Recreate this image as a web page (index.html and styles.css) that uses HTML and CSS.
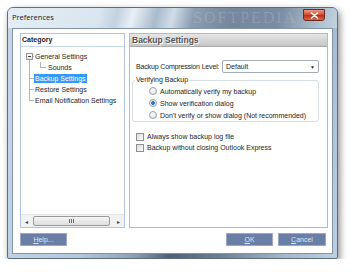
FILE: index.html
```html
<!DOCTYPE html>
<html lang="en">
<head>
    <meta charset="UTF-8">
    <title>Preferences</title>
    <link rel="stylesheet" href="styles.css">
</head>
<body>

<div class="window">
    <div class="titlebar">
        <span class="title">Preferences</span>
        <span class="watermark">SOFTPEDIA</span>
        <button class="close">
            <svg width="9" height="7" viewBox="0 0 9 7"><path d="M1.5 1 L7.5 6 M7.5 1 L1.5 6" stroke="#fff" stroke-width="1.6" stroke-linecap="round"/></svg>
        </button>
    </div>

    <div class="client">
        <div class="panes">
            <div class="cat-pane">
                <div class="cat-head">Category</div>
                <ul class="tree">
                    <li class="first"><span class="exp"></span>General Settings</li>
                    <li class="child"><span class="elbow"></span>Sounds</li>
                    <li><span class="sel">Backup Settings</span></li>
                    <li>Restore Settings</li>
                    <li class="last">Email Notification Settings</li>
                </ul>
                <div class="hscroll">
                    <span class="sb-btn">&#9666;</span>
                    <span class="thumb"><i></i><i></i><i></i></span>
                    <span class="sb-btn right">&#9656;</span>
                </div>
            </div>

            <div class="set-pane">
                <div class="set-head">Backup Settings</div>
                <div class="set-body">
                    <div class="field">
                        <label>Backup Compression Level:</label>
                        <div class="select">Default<span class="drop">&#9660;</span></div>
                    </div>
                    <fieldset class="group">
                        <legend>Verifying Backup</legend>
                        <div class="opt"><span class="radio"></span>Automatically verify my backup</div>
                        <div class="opt"><span class="radio on"></span>Show verification dialog</div>
                        <div class="opt"><span class="radio"></span>Don't verify or show dialog (Not recommended)</div>
                    </fieldset>
                    <div class="checks">
                        <div class="opt"><span class="box"></span>Always show backup log file</div>
                        <div class="opt"><span class="box"></span>Backup without closing Outlook Express</div>
                    </div>
                </div>
            </div>
        </div>

        <div class="buttons">
            <button class="btn"><u>H</u>elp...</button>
            <button class="btn push"><u>O</u>K</button>
            <button class="btn wide"><u>C</u>ancel</button>
        </div>
    </div>
</div>

</body>
</html>
```

FILE: styles.css
```css
body {
    margin: 0;
    background: #fff;
    font-family: 'Liberation Sans', Arial, sans-serif;
    font-size: 7px;
    color: #1e1e1e;
}
.window {
    margin: 7px 0 0 7px;
    width: 331px;
    height: 252px;
    box-sizing: border-box;
    padding: 0 4px 4px;
    border: 1px solid #5d6d7e;
    border-radius: 6px 6px 2px 2px;
    background: linear-gradient(100deg, #c6d8e8 0%, #b4c9dc 30%, #8fa3b7 45%, #4f6277 55%, #6a7d91 68%, #a2b6c8 85%, #bed0df 100%);
    box-shadow: 2px 3px 7px rgba(0, 0, 0, 0.45);
    display: flex;
    flex-direction: column;
}
.titlebar {
    height: 20px;
    display: flex;
    align-items: flex-start;
    position: relative;
    margin: 0 -4px;
    padding: 0 4px;
    border-radius: 5px 5px 0 0;
    background: linear-gradient(105deg, #e4edf5 0%, #d9e5ef 28%, #c2d2e0 33%, #e8eff6 38%, #a9bbcc 45%, #d0dde8 50%, #8c9eb1 56%, #74879b 68%, #7b8da1 82%, #a6b8c8 92%, #c4d3e0 100%);
}
.title {
    margin-top: 3px;
    line-height: 12px;
    font-family: 'Open Sans', 'Liberation Sans', sans-serif;
    font-size: 7.5px;
    color: #1a1a1a;
}
.watermark {
    position: absolute;
    left: 185px;
    top: 1px;
    font-family: 'Liberation Serif', serif;
    font-size: 16px;
    letter-spacing: 2px;
    color: rgba(210, 220, 230, 0.22);
}
.close {
    margin: 1px 8px 0 auto;
    width: 22px;
    height: 12px;
    padding: 0;
    border: 1px solid #6b2a20;
    border-radius: 0 0 3px 3px;
    background: linear-gradient(#e99a86, #d5523a 45%, #bf2f16 55%, #d86a4e);
    display: flex;
    align-items: center;
    justify-content: center;
}
.client {
    flex: 1;
    box-sizing: border-box;
    background: #fff;
    border: 1px solid #8193a6;
    padding: 4px 4px 0 7px;
    display: flex;
    flex-direction: column;
}
.panes {
    display: flex;
    gap: 4px;
    height: 195px;
}
.cat-pane {
    width: 105px;
    box-sizing: border-box;
    border: 1px solid #aec4e0;
    display: flex;
    flex-direction: column;
    overflow: hidden;
}
.cat-head {
    height: 12px;
    line-height: 12px;
    padding-left: 1px;
    font-weight: bold;
    border-bottom: 1px solid #c5d6ec;
}
.tree {
    list-style: none;
    margin: 0;
    padding: 4px 0 0;
}
.tree li {
    position: relative;
    height: 11px;
    line-height: 11px;
    padding-left: 14px;
    white-space: nowrap;
}
.tree li::before {
    content: "";
    position: absolute;
    left: 8px;
    top: 0;
    bottom: 0;
    border-left: 1px solid #b4b4b4;
}
.tree li::after {
    content: "";
    position: absolute;
    left: 9px;
    top: 5px;
    width: 4px;
    border-top: 1px solid #b4b4b4;
}
.tree li.first::before {
    top: 6px;
}
.tree li.last::before {
    bottom: 5px;
}
.tree li.child {
    padding-left: 27px;
}
.tree li.child::after {
    display: none;
}
.elbow {
    position: absolute;
    left: 19px;
    top: 0;
    width: 5px;
    height: 5px;
    border-left: 1px solid #b4b4b4;
    border-bottom: 1px solid #b4b4b4;
}
.exp {
    position: absolute;
    left: 5px;
    top: 2px;
    width: 7px;
    height: 7px;
    box-sizing: border-box;
    border: 1px solid #959595;
    background: linear-gradient(#fff, #e4e4e4);
    z-index: 1;
}
.exp::after {
    content: "";
    position: absolute;
    left: 1px;
    top: 2px;
    width: 3px;
    border-top: 1px solid #3b3b3b;
}
.sel {
    background: #3399ff;
    color: #fff;
    padding: 1px 1px;
    margin-left: -1px;
}
.hscroll {
    margin-top: auto;
    height: 12px;
    display: flex;
    align-items: center;
    background: #f2f2f2;
    border-top: 1px solid #e6e6e6;
}
.sb-btn {
    width: 10px;
    text-align: center;
    font-size: 6px;
    color: #444;
}
.sb-btn.right {
    margin-left: auto;
    width: 11px;
}
.thumb {
    margin-left: 2px;
    width: 77px;
    height: 10px;
    box-sizing: border-box;
    border: 1px solid #9b9b9b;
    border-radius: 2px;
    background: linear-gradient(#f6f6f6, #dcdcdc);
    display: flex;
    justify-content: center;
    align-items: center;
    gap: 1px;
}
.thumb i {
    width: 1px;
    height: 4px;
    background: #6a6a6a;
}
.set-pane {
    flex: 1;
    border: 1px solid #b9b9b9;
    background: #fff;
}
.set-head {
    height: 12px;
    line-height: 12px;
    padding-left: 2px;
    font-weight: bold;
    font-size: 8.5px;
    color: #575757;
    text-shadow: 1px 1px 0 #fff;
    background: linear-gradient(#e6e6e6, #c6c6c6);
    border-bottom: 1px solid #a9a9a9;
}
.set-body {
    padding: 13px 0 0 6px;
}
.field {
    display: flex;
    align-items: center;
    height: 13px;
}
.field label {
    width: 86px;
    white-space: nowrap;
    letter-spacing: -0.15px;
}
.select {
    width: 97px;
    height: 13px;
    box-sizing: border-box;
    border: 1px solid #a4abb4;
    border-radius: 2px;
    padding: 0 3px;
    display: flex;
    align-items: center;
    justify-content: space-between;
}
.drop {
    font-size: 5px;
    color: #333;
}
.group {
    margin: 2px 0 0 -4px;
    width: 187px;
    box-sizing: border-box;
    padding: 0 0 0 16px;
    border: 1px solid #d6dee4;
    border-radius: 3px;
}
.group legend {
    padding: 0 1px;
    margin-left: -14px;
    line-height: 10px;
}
.opt {
    display: flex;
    align-items: center;
    height: 12px;
    white-space: nowrap;
}
.checks {
    margin-top: 9px;
}
.checks .opt {
    height: 11px;
}
.radio {
    width: 6px;
    height: 6px;
    margin-right: 3px;
    border: 1px solid #9aa0a6;
    border-radius: 50%;
    background: radial-gradient(circle at 40% 35%, #fff, #dadde0);
}
.radio.on {
    background: radial-gradient(circle, #2a7fd0 0 1.6px, #e9eef3 2.2px);
}
.box {
    width: 6px;
    height: 6px;
    margin-right: 3px;
    border: 1px solid #8e8f8f;
    background: linear-gradient(135deg, #dcdcdc, #fbfbfb);
}
.buttons {
    display: flex;
    gap: 5px;
    margin-top: 5px;
    padding-right: 2px;
}
.btn {
    width: 47px;
    height: 13px;
    padding: 0;
    border: 1px solid #9aa8c2;
    background: #6b7ea6;
    color: #dfe5ef;
    font-family: 'Liberation Sans', Arial, sans-serif;
    font-size: 7px;
    line-height: 11px;
}
.btn.push {
    margin-left: auto;
}
.btn.wide {
    width: 48px;
}
```
